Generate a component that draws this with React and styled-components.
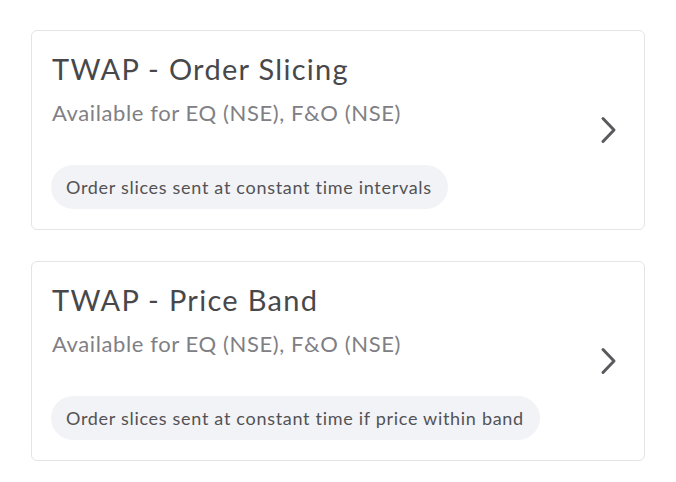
import React from 'react';
import styled, { createGlobalStyle } from 'styled-components';

const GlobalStyle = createGlobalStyle`
  html, body {
    margin: 0;
    padding: 0;
    background: #ffffff;
    font-family: Lato, "Open Sans", sans-serif;
  }
`;

const List = styled.div`
  display: flex;
  flex-direction: column;
  gap: 31px;
  padding: 30px 31px 0 31px;
  width: 676px;
  box-sizing: border-box;
`;

const Card = styled.div`
  display: flex;
  align-items: flex-start;
  height: 200px;
  box-sizing: border-box;
  border: 1px solid #e4e4e6;
  border-radius: 6px;
  padding: 20px 25px 0 19px;
  background: #fff;
`;

const Body = styled.div`
  flex: 1;
  display: flex;
  flex-direction: column;
  align-items: flex-start;
`;

const Title = styled.div`
  font-size: 29px;
  line-height: 36px;
  letter-spacing: 1.3px;
  color: #48484b;
  margin-left: 1px;
`;

const Subtitle = styled.div`
  font-size: 22px;
  line-height: 28px;
  letter-spacing: 0.6px;
  color: #808084;
  margin: 12px 0 0 1px;
`;

const Pill = styled.div`
  margin-top: 38px;
  background: #f2f3f6;
  border-radius: 22px;
  height: 44px;
  display: flex;
  align-items: center;
  padding: 0 16px 0 15px;
  font-size: 18px;
  letter-spacing: 0.7px;
  color: #525255;
`;

const Chevron = styled.svg`
  align-self: center;
  margin-top: -20px;
  width: 22px;
  height: 30px;
  flex-shrink: 0;
`;

const items = [
  { title: 'TWAP - Order Slicing', note: 'Order slices sent at constant time intervals' },
  { title: 'TWAP - Price Band', note: 'Order slices sent at constant time if price within band' },
];

export default function App() {
  return (
    <>
      <GlobalStyle />
      <List>
        {items.map((it) => (
          <Card key={it.title}>
            <Body>
              <Title>{it.title}</Title>
              <Subtitle>Available for EQ (NSE), F&amp;O (NSE)</Subtitle>
              <Pill>{it.note}</Pill>
            </Body>
            <Chevron viewBox="0 0 22 30">
              <path d="M6 3.5 L17 15 L6 26.5" fill="none" stroke="#5a5a5e" strokeWidth="3" strokeLinecap="round" strokeLinejoin="round" />
            </Chevron>
          </Card>
        ))}
      </List>
    </>
  );
}
